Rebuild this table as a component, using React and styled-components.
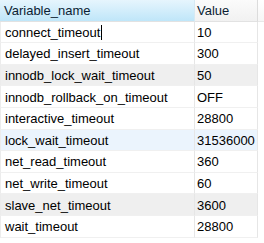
import React from 'react'
import styled, {createGlobalStyle} from 'styled-components'

const GlobalStyle = createGlobalStyle`
  html, body {
    margin: 0;
    padding: 0;
    background: #fff;
  }
  body {
    font-family: "Liberation Sans", Arial, sans-serif;
    font-size: 13px;
    color: #000;
  }
`

const rows = [
  {name: 'connect_timeout', value: '10', cursor: true},
  {name: 'delayed_insert_timeout', value: '300'},
  {name: 'innodb_lock_wait_timeout', value: '50', tone: 'gray'},
  {name: 'innodb_rollback_on_timeout', value: 'OFF'},
  {name: 'interactive_timeout', value: '28800'},
  {name: 'lock_wait_timeout', value: '31536000', tone: 'blue'},
  {name: 'net_read_timeout', value: '360'},
  {name: 'net_write_timeout', value: '60'},
  {name: 'slave_net_timeout', value: '3600', tone: 'gray'},
  {name: 'wait_timeout', value: '28800'},
]

const tones = {
  gray: '#efefef',
  blue: '#ebf4fd',
}

function App() {
  return (
    <>
      <GlobalStyle />
      <Grid>
        <HeadCell sorted>Variable_name</HeadCell>
        <HeadCell>Value</HeadCell>
        <HeadFill />
        {rows.map(r => (
          <React.Fragment key={r.name}>
            <Cell first tone={r.tone}>
              {r.name}
              {r.cursor ? <Caret /> : null}
            </Cell>
            <Cell tone={r.tone}>{r.value}</Cell>
            <Blank />
          </React.Fragment>
        ))}
      </Grid>
    </>
  )
}

export default App

const Grid = styled.div`
  display: grid;
  grid-template-columns: 195px 63px 1fr;
  grid-auto-rows: 21.6px;
  width: 264px;
`

const HeadCell = styled.div`
  display: flex;
  align-items: center;
  padding-left: ${p => (p.sorted ? '4px' : '2px')};
  padding-top: 1px;
  background: ${p => p.sorted
    ? 'linear-gradient(#e6f5fd, #bfe6f9)'
    : 'linear-gradient(#fbfbfb, #f1f1f1)'};
  border-right: 1px solid ${p => (p.sorted ? '#d6e9f3' : '#dcdcdc')};
  border-bottom: 1px solid #e2e2e2;
  white-space: nowrap;
  overflow: hidden;
  color: #0b1d33;
`

const HeadFill = styled.div`
  background: linear-gradient(#ffffff, #f6f6f6);
  border-bottom: 1px solid #e8e8e8;
`

const Cell = styled.div`
  position: relative;
  display: flex;
  align-items: center;
  padding-left: ${p => (p.first ? '4px' : '2px')};
  padding-top: 1px;
  background: ${p => tones[p.tone] || '#fff'};
  border-right: 1px solid #e6e6e6;
  border-left: ${p => (p.first ? '1px solid #ececec' : 'none')};
  border-bottom: 1px solid #f0f0f0;
  white-space: nowrap;
  overflow: hidden;
`

const Blank = styled.div`
  background: #fff;
`

const Caret = styled.span`
  display: inline-block;
  width: 1px;
  height: 15px;
  background: #000;
  margin-left: 1px;
`
